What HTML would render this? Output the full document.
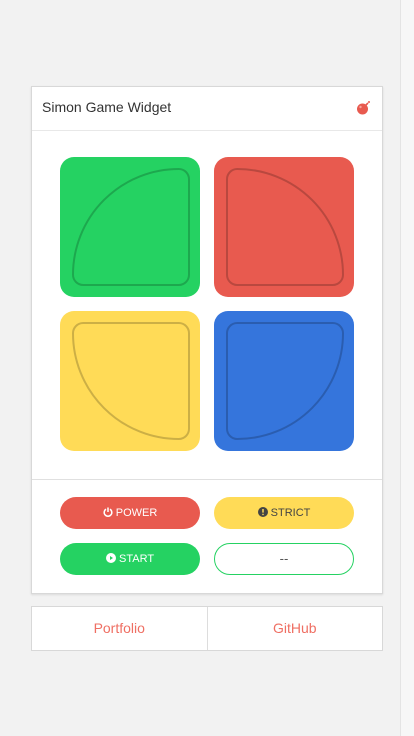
<!DOCTYPE html>
<html><head><style>
*{box-sizing:border-box;margin:0;padding:0}
body{width:414px;height:736px;background:#f2f2f2;font-family:"Liberation Sans",sans-serif;position:relative;overflow:hidden}
.sb{position:absolute;left:400px;top:0;width:14px;height:736px;background:#f7f7f7;border-left:1px solid #e4e4e4}
.card{position:absolute;left:31px;top:86px;width:352px;height:508px;background:#fff;border:1px solid #d8d8d8;box-shadow:0 1px 2px rgba(0,0,0,.1)}
.hdr{height:44px;border-bottom:1px solid #e8e8e8;padding:12px 0 0 10px;font-size:14px;color:#333}
.q{position:absolute;width:140px;height:140px;border-radius:14px}
.q i{position:absolute;left:12px;top:11px;width:118px;height:118px;border:2.5px solid rgba(0,0,0,.2)}
.div{position:absolute;left:0;top:392px;width:350px;border-top:1px solid #e0e0e0}
.b{position:absolute;width:140px;height:32px;border-radius:16px;font-size:11px;text-align:center;line-height:32px}
.b svg{vertical-align:-1px}
.foot{position:absolute;left:31px;top:606px;width:352px;height:45px;background:#fff;border:1px solid #d8d8d8;display:flex}
.foot div{flex:1;text-align:center;line-height:43px;color:#ef6f63;font-size:14px}
</style></head><body>
<div class="sb"></div>
<div class="card">
<div class="hdr">Simon Game Widget
<svg style="position:absolute;left:324px;top:13px" width="15" height="15" viewBox="0 0 15 15"><circle cx="6.5" cy="9" r="5.5" fill="#e85a4f"/><path d="M10 5 L12 3" stroke="#e85a4f" stroke-width="1.6"/><circle cx="13" cy="2" r="1" fill="#e85a4f"/><circle cx="4.5" cy="7" r="1.2" fill="#f6a49c"/></svg></div>
<div class="q" style="left:28px;top:70px;background:#25d262"><i style="border-radius:114px 12px 12px 12px"></i></div>
<div class="q" style="left:182px;top:70px;background:#e85a4f"><i style="border-radius:12px 114px 12px 12px"></i></div>
<div class="q" style="left:28px;top:224px;background:#ffdb57"><i style="border-radius:12px 12px 12px 114px"></i></div>
<div class="q" style="left:182px;top:224px;background:#3575dc"><i style="border-radius:12px 12px 114px 12px"></i></div>
<div class="div"></div>
<div class="b" style="left:28px;top:410px;background:#e85a4f;color:#fff"><svg width="10" height="10" viewBox="0 0 10 10"><path d="M3 2.2A3.8 3.8 0 1 0 7 2.2" fill="none" stroke="#fff" stroke-width="1.5"/><path d="M5 0.5V5" stroke="#fff" stroke-width="1.5"/></svg> POWER</div>
<div class="b" style="left:182px;top:410px;background:#ffdb57;color:#444"><svg width="10" height="10" viewBox="0 0 10 10"><circle cx="5" cy="5" r="5" fill="#444"/><path d="M5 2v3.6" stroke="#ffdb57" stroke-width="1.5"/><circle cx="5" cy="7.4" r=".8" fill="#ffdb57"/></svg> STRICT</div>
<div class="b" style="left:28px;top:456px;background:#25d262;color:#fff"><svg width="10" height="10" viewBox="0 0 10 10"><circle cx="5" cy="5" r="5" fill="#fff"/><path d="M4 3v4l3-2z" fill="#25d262"/></svg> START</div>
<div class="b" style="left:182px;top:456px;border:1px solid #25d262;color:#555;font-size:13px;line-height:30px">--</div>
</div>
<div class="foot"><div style="border-right:1px solid #ddd">Portfolio</div><div>GitHub</div></div>
</body></html>
